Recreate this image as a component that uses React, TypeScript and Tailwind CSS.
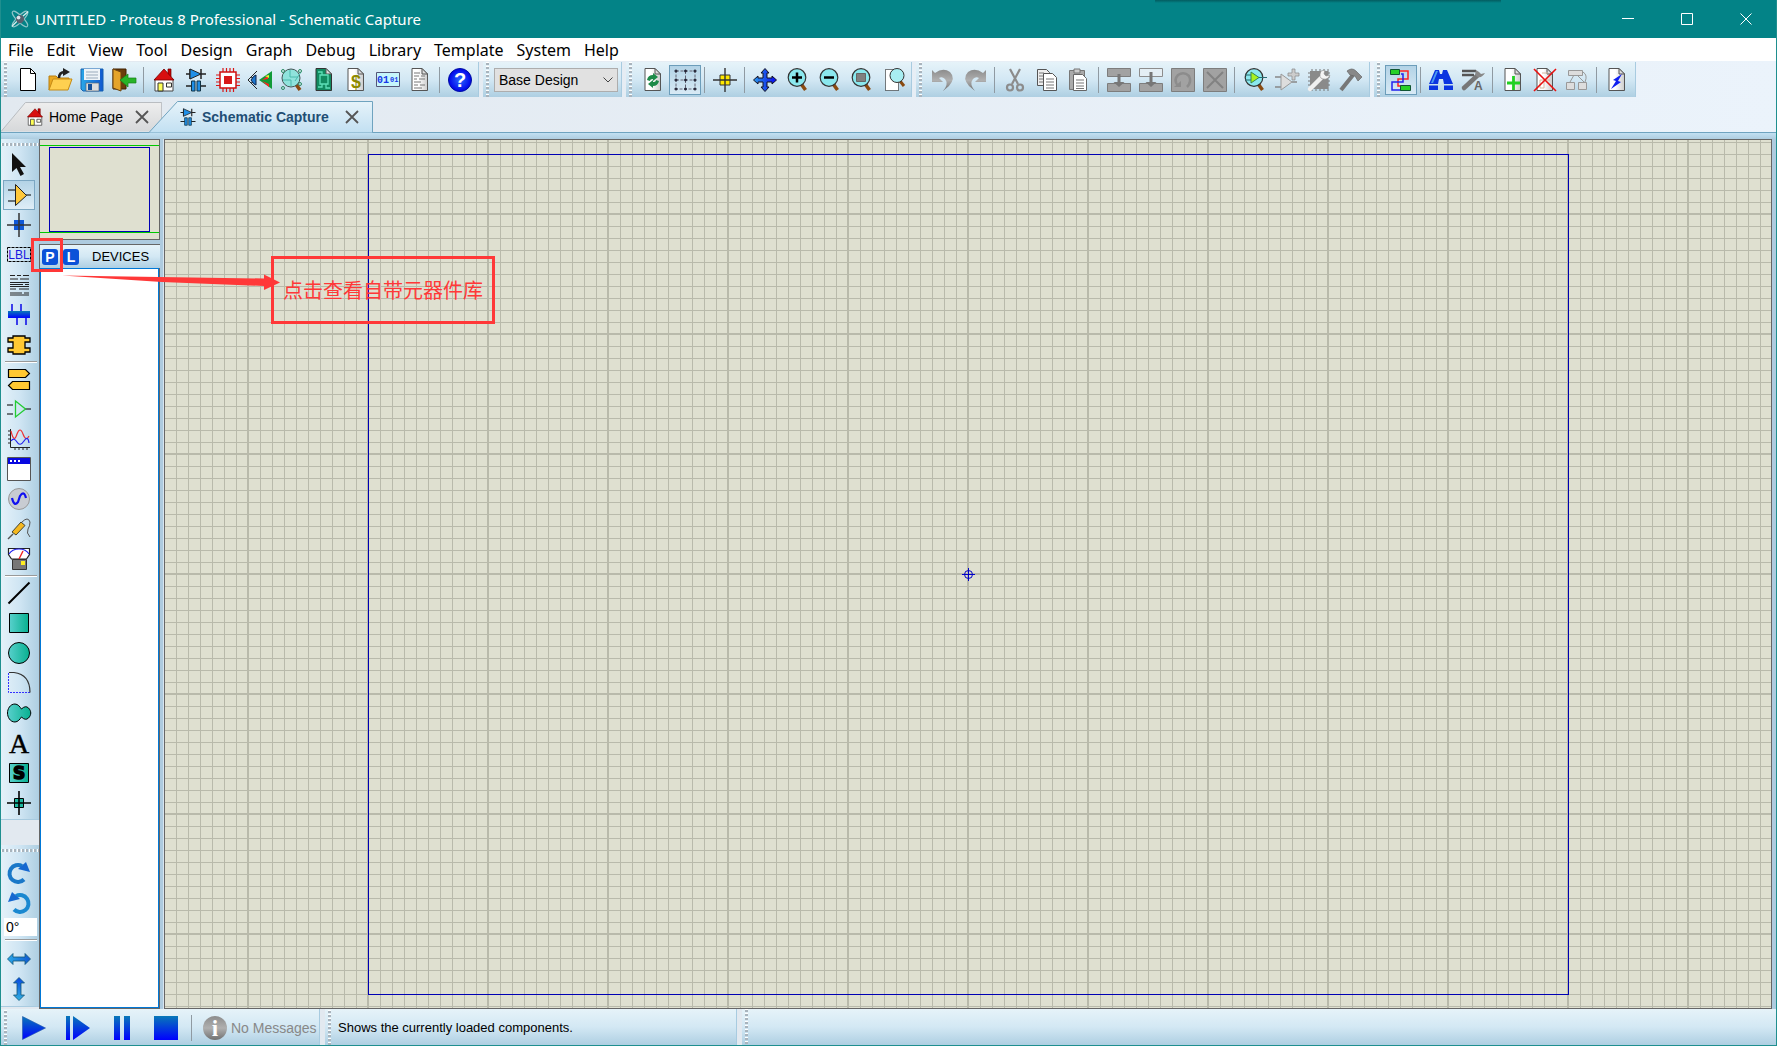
import { ReactNode, useState } from "react";

const page = (
  <>
    <path d="M4 .5h10l5.500 5.500v16.500H4z" fill="url(#paper)" stroke="#555" />
    <path d="M14 .5V6h5.500z" fill="#ddd" stroke="#555" />
  </>
);

const lens = (
  <>
    <path d="M15.500 15l5 7" stroke="#8a4a10" strokeWidth="3.500" />
    <circle cx="12" cy="9.500" r="8.800" fill="#8be8ee" stroke="#333" strokeWidth="1.200" />
  </>
);

const house = (
  <>
    <path d="M16 1h3v8h-3z" fill="#c00" stroke="#600" strokeWidth=".7" />
    <path d="M3 11h18v12H3z" fill="#fff" stroke="#444" />
    <path d="M12 1L2 12h20z" fill="#d80f0f" stroke="#700" strokeWidth=".8" />
    <path d="M6 15h5v8H6z" fill="#ff5" stroke="#333" />
    <path d="M14.500 15h5v4h-5z" fill="#ffe" stroke="#333" />
  </>
);

const parts = (
  <>
    <path d="M2 6h20M6 1v10M17 1v10M2 18h6M16 18h6" stroke="#222" strokeWidth="1.500" />
    <path d="M6 1l11 5-11 5z" fill="#1e8fe8" stroke="#222" />
    <path d="M7.500 13h3.500v10H7.500zM13 13h3.500v10H13z" fill="#1e8fe8" stroke="#134" />
  </>
);

const icons: Record<string, ReactNode> = {
  app: (
    <>
      <g fill="none" stroke="#8fc5c8" strokeWidth="1.500">
        <ellipse cx="12" cy="12" rx="14" ry="4" transform="rotate(45 12 12)" />
        <ellipse cx="12" cy="12" rx="14" ry="4" transform="rotate(-45 12 12)" />
      </g>
      <path d="M1 22l8-8M15 9l8-7" stroke="#e0f0f0" strokeWidth="1.500" />
      <circle cx="12" cy="12" r="5.500" fill="#56606e" />
      <circle cx="10" cy="10" r="2.500" fill="#dde4ea" />
    </>
  ),
  new: (
    <>
      <path d="M4.500 .5h10l5 5v17h-15z" fill="#fff" stroke="#000" />
      <path d="M14.500 .5v5h5" fill="none" stroke="#000" />
    </>
  ),
  open: (
    <>
      <path d="M1 22V8h7l2 2h11v4" fill="#e9a820" stroke="#b97f10" />
      <path d="M1 22l4-11h19l-4 11z" fill="#ffd050" stroke="#c58a14" />
      <path d="M11 10q0-6 6-6" fill="none" stroke="#222" strokeWidth="2.500" />
      <path d="M15 0l7 4-7 4z" fill="#222" />
    </>
  ),
  save: (
    <>
      <path d="M1 1h22v22H3l-2-2z" fill="url(#sky)" stroke="#1460b0" />
      <path d="M4 1h16v11H4z" fill="#eef4f8" />
      <path d="M6 4h12M6 7h12M6 10h12" stroke="#9ab" />
      <path d="M6 15h13v8H6z" fill="#ddd" stroke="#567" strokeWidth=".7" />
      <path d="M8 16h4v6H8z" fill="#15509a" />
    </>
  ),
  exit: (
    <>
      <path d="M1 1h13v20H1z" fill="#6b3e0c" stroke="#402000" />
      <path d="M1 1l8 3v19l-8-3z" fill="#e5a42a" stroke="#6b4310" />
      <path d="M8 12l8-6v4h8v5h-8v4z" fill="#28b428" stroke="#188018" strokeWidth=".7" />
    </>
  ),
  home: house,
  schematic: parts,
  pcb: (
    <>
      <path d="M7 0v24M10.500 0v24M14 0v24M17.500 0v24M0 7h24M0 10.500h24M0 14h24M0 17.500h24" stroke="#d81818" strokeWidth="1.200" />
      <path d="M4 4h16v16H4z" fill="#fff" stroke="#d01010" strokeWidth="1.500" />
      <path d="M8 8h8v8H8z" fill="#d81818" />
    </>
  ),
  view3d: (
    <>
      <path d="M9 3L0 12l9 9M3 9l5 2M3 15l5-2" fill="none" stroke="#222" />
      <path d="M3 12q3-5 5-5v10q-2 0-5-5z" fill="#1e78d0" stroke="#124" />
      <path d="M11 12L24 3v18z" fill="#119a38" />
      <path d="M14 12l6-4v3zM14 13l7 3v3z" fill="#f22" />
      <path d="M17 8l4-1v3z" fill="#ee3" />
    </>
  ),
  gerber: (
    <>
      <path d="M15 15l5 7" stroke="#8a4a10" strokeWidth="3.500" />
      <circle cx="11" cy="10" r="9" fill="#8fe3dc" stroke="#455" />
      <path d="M3 12h8v6M10 2v7h8M15 13l6-9" fill="none" stroke="#4bb9ac" />
      <g fill="none" stroke="#2a8a60">
        <circle cx="3" cy="20" r="1.500" />
        <circle cx="20" cy="3" r="1.500" />
        <circle cx="20" cy="16" r="1.500" />
        <circle cx="3" cy="3" r="1.500" />
      </g>
    </>
  ),
  explorer: (
    <>
      <path d="M4 .5h10l5.500 5.500v16.500H4z" fill="#118a60" stroke="#333" />
      <path d="M14 .5V6h5.500z" fill="#ddd" stroke="#555" />
      <path d="M8 7h8v9H8zM6 19h4v-3M14 16v4h4M6 4h4v3" fill="none" stroke="#5fe0b8" strokeWidth="1.300" />
    </>
  ),
  bom: (
    <>
      {page}
      <text x="12" y="19.500" textAnchor="middle" fontSize="18" fontWeight="700" fill="#8f8a00" fontFamily="Liberation Sans">$</text>
    </>
  ),
  source: (
    <>
      <path d="M.5 4.500h23v14H.5z" fill="#c6f5fb" stroke="#557" />
      <text x="1" y="15" fontSize="10" fontWeight="700" fill="#1838e8" fontFamily="Liberation Mono">01</text>
      <text x="14" y="14" fontSize="7" fontWeight="700" fill="#1838e8" fontFamily="Liberation Mono">01</text>
    </>
  ),
  notes: (
    <>
      {page}
      <path d="M6 5h6M6 8h5M13 8h4M6 11h3M11 11h6M6 14h7M6 17h4M12 17h5M6 20h8" stroke="#777" />
    </>
  ),
  help: (
    <>
      <circle cx="12" cy="12" r="11.500" fill="url(#ball)" stroke="#0010a0" />
      <text x="12" y="19" textAnchor="middle" fontSize="20" fontWeight="700" fill="#fff" fontFamily="Liberation Sans">?</text>
    </>
  ),
  refresh: (
    <>
      {page}
      <path d="M6 12q1-5 6-5V5l5 4-5 4v-2q-3 0-3 2z" fill="#1d8a48" />
      <path d="M18 13q-1 5-6 5v2l-5-4 5-4v2q3 0 3-2z" fill="#1d8a48" />
    </>
  ),
  grid: (
    <>
      <path d="M3 3h19v18H3zM12.500 3v18M3 12h19" fill="none" stroke="#667" strokeDasharray="3 1.500" />
      <path d="M1.500 3h3M3 1.500v3M11 3h3M12.500 1.500v3M20.500 3h3M22 1.500v3M1.500 12h3M3 10.500v3M11 12h3M12.500 10.500v3M20.500 12h3M22 10.500v3M1.500 21h3M3 19.500v3M11 21h3M12.500 19.500v3M20.500 21h3M22 19.500v3" stroke="#223" strokeWidth="1.300" />
    </>
  ),
  origin: (
    <>
      <path d="M7 7h10v10H7z" fill="#ffe800" stroke="#333" />
      <path d="M0 12h24M12 0v24" stroke="#333" strokeWidth="1.400" />
    </>
  ),
  pan: <path d="M12 .5l4 4.500h-2v5h5V8l4.500 4-4.500 4v-2h-5v5h2l-4 4.500L8 19h2v-5H5v2L.5 12 5 8v2h5V5H8z" fill="url(#blue)" stroke="#112" />,
  zoomIn: (
    <>
      {lens}
      <path d="M12 4.500v10M7 9.500h10" stroke="#000" strokeWidth="2.500" />
    </>
  ),
  zoomOut: (
    <>
      {lens}
      <path d="M7 9.500h10" stroke="#000" strokeWidth="2.500" />
    </>
  ),
  zoomAll: (
    <>
      {lens}
      <path d="M7.500 5.500h9v8h-9z" fill="#808080" stroke="#666" />
    </>
  ),
  zoomArea: (
    <>
      <path d="M4.500 1.500h13v21h-13z" fill="#fff" stroke="#000" strokeDasharray="1 1" />
      <path d="M19 13l4 5" stroke="#8a4a10" strokeWidth="3" />
      <circle cx="16" cy="7.500" r="7" fill="#a8eef2" stroke="#333" />
    </>
  ),
  undo: <path d="M1 2l3 3q8-6 15-1 6 6-1 14l-6 5q6-7 2-12-3-3-6-1l4 4H1z" fill="url(#grey)" />,
  redo: <path d="M23 2l-3 3q-8-6-15-1-6 6 1 14l6 5q-6-7-2-12 3-3 6-1l-4 4h11z" fill="url(#grey)" />,
  cut: (
    <g fill="none" stroke="#8c8c8c" strokeWidth="2.200">
      <path d="M7 1l8 15M17 1L9 16" />
      <circle cx="7" cy="19.500" r="3" />
      <circle cx="17" cy="19.500" r="3" />
    </g>
  ),
  copy: (
    <>
      <path d="M2.500 1.500h9l3 3v13h-12z" fill="#eee" stroke="#555" />
      <path d="M4 5h5M4 8h5M4 11h5M4 14h5" stroke="#777" />
      <path d="M8.500 5.500h9l4 4v13h-13z" fill="#fff" stroke="#555" />
      <path d="M11 11h8M11 14h8M11 17h8M11 20h8" stroke="#777" />
    </>
  ),
  paste: (
    <>
      <path d="M2.500 2.500h15v19h-15z" fill="#aaa" stroke="#777" />
      <path d="M7 1h6v4H7z" fill="#ccc" stroke="#777" />
      <path d="M6.500 6.500h9l4 4v12h-13z" fill="#fff" stroke="#666" />
      <path d="M9 12h8M9 15h8M9 18h8M9 20.500h8" stroke="#777" />
    </>
  ),
  blockCopy: (
    <>
      <path d="M.5 .5h23v8H.5zM.5 15.500h23v8H.5z" fill="#a2a2a2" stroke="#7d7d7d" />
      <path d="M10.500 6h3v8h4L12 19l-5.500-5h4z" fill="#777" />
    </>
  ),
  blockMove: (
    <>
      <path d="M.5 .5h23v8H.5z" fill="#e4eef4" stroke="#8d8d8d" />
      <path d="M.5 15.500h23v8H.5z" fill="#a2a2a2" stroke="#7d7d7d" />
      <path d="M10.500 4h3v10h4L12 19l-5.500-5h4z" fill="#777" />
    </>
  ),
  blockRotate: (
    <>
      <path d="M.5 .5h23v23H.5z" fill="#a2a2a2" stroke="#7d7d7d" />
      <path d="M7 18q-5-6 0-11 6-4 11 1 3 6-2 11" fill="none" stroke="#8c8c8c" strokeWidth="2.500" />
      <path d="M3 19h7v-6z" fill="#8c8c8c" />
    </>
  ),
  blockDelete: (
    <>
      <path d="M.5 .5h23v23H.5z" fill="#a2a2a2" stroke="#7d7d7d" />
      <path d="M4 4l16 16M20 4L4 20" stroke="#828282" strokeWidth="2" />
    </>
  ),
  pick: (
    <>
      <path d="M14.500 15l5 7" stroke="#8a4a10" strokeWidth="3.500" />
      <circle cx="11" cy="9.500" r="8.800" fill="#8be8ee" stroke="#333" strokeWidth="1.200" />
      <path d="M2 7h7M2 12h7M15 9.500h9" stroke="#2a6a70" />
      <path d="M8 4l8 5.500L8 15z" fill="#a8f020" stroke="#385" />
    </>
  ),
  make: (
    <>
      <path d="M0 9h6M0 19h6M17 14h5" stroke="#888" strokeWidth="1.300" />
      <path d="M6 6l11 8-11 8z" fill="#ddd" stroke="#999" />
      <path d="M17 1h3v4h4v3h-4v4h-3V8h-4V5h4z" fill="#ccc" stroke="#888" strokeWidth=".7" />
    </>
  ),
  packaging: (
    <>
      <path d="M5 1v22M9 1v22M13 1v22M17 1v22M21 1v22M1 5h22M1 9h22M1 13h22M1 17h22" stroke="#777" />
      <path d="M3 3h18v18H3z" fill="#8a8a8a" />
      <path d="M3 21L16 8" stroke="#f0f0f0" strokeWidth="4.500" strokeLinecap="round" />
      <path d="M14 3q-3 7 2 8t7-4l-4 1-2-2 1-4z" fill="#f4f4f4" stroke="#888" strokeWidth=".6" />
    </>
  ),
  decompose: (
    <>
      <path d="M14 7L2 22" stroke="#777" strokeWidth="4" />
      <path d="M8 3q5-4 9 0l6 6-4 4-3-5-5-1z" fill="#888" stroke="#666" strokeWidth=".7" />
    </>
  ),
  autoroute: (
    <>
      <path d="M11 3h8v8H9v7h4" fill="none" stroke="#f22" strokeWidth="1.500" />
      <path d="M12 6h2v8H3v8h9" fill="none" stroke="#22e" strokeWidth="1.500" />
      <path d="M1.500 1.500h9v5h-9zM11.500 17.500h10v5h-10z" fill="#28d028" stroke="#153" />
    </>
  ),
  search: (
    <>
      <path d="M6 2h4l1 4h2l1-4h4l6 14h-9l-1-5h-4l-1 5H0z" fill="#0a34e0" />
      <path d="M7 3h2L4 15H2z" fill="#4a9af0" />
      <path d="M0 17.500h9V22H0zM15 17.500h9V22h-9z" fill="#0a34e0" />
    </>
  ),
  property: (
    <>
      <path d="M1 3h14M1 7h12" stroke="#555" strokeWidth="2.500" />
      <path d="M3 20L17 7" stroke="#777" strokeWidth="4.500" strokeLinecap="round" />
      <path d="M15 2q-2 6 2 7t7-4l-4 1-2-2z" fill="#888" />
      <text x="13" y="22" fontSize="12" fontWeight="700" fill="#666" fontFamily="Liberation Sans">A</text>
    </>
  ),
  newSheet: (
    <>
      {page}
      <path d="M12.500 8v14M6 15h13" stroke="#22d022" strokeWidth="2.800" />
    </>
  ),
  removeSheet: (
    <>
      {page}
      <path d="M9 5h6M7 12h4v8H7zM13 12h4" fill="none" stroke="#d8b8a0" />
      <path d="M1 1l22 22M23 1L1 23" stroke="#e81010" strokeWidth="1.600" />
    </>
  ),
  exitSheet: (
    <g fill="#ddd" stroke="#999">
      <path d="M9 7l-4 7M12 7l7 7M18 4q5 3 2 10" fill="none" />
      <path d="M3.500 2.500h14v5h-14zM1.500 14.500h8v7h-8zM13.500 14.500h8v7h-8z" />
    </g>
  ),
  erc: (
    <>
      {page}
      <path d="M17 6l-9 6 3 1-5 8 10-7-3-1z" fill="#1020f0" />
    </>
  ),
  // mode icons
  select: <path d="M5 0v19l4.500-4 4 8 3.500-2-4-7h6z" fill="#111" />,
  component: (
    <>
      <path d="M1 7h8M1 18h8M19 12h5" stroke="#000" />
      <path d="M8.500 1.500l11 11-11 10z" fill="#ffc83a" stroke="#222" />
    </>
  ),
  junction: (
    <>
      <path d="M7 7h10v10H7z" fill="#0f58d8" />
      <path d="M0 12h24M12 0v24" stroke="#333" strokeWidth="1.500" />
    </>
  ),
  label: (
    <>
      <path d="M.5 4.500h23v14H.5z" fill="none" stroke="#000" strokeDasharray="3 1" />
      <text x="12" y="16" textAnchor="middle" fontSize="12" fill="#1a1ae0" fontFamily="Liberation Sans">LBL</text>
    </>
  ),
  script: <path d="M3 2.500h5M10 2.500h4M16 2.500h6M3 6h8M13 6h9M3 9.500h19M3 11.500h13M18 11.500h4M3 13.500h19M3 16h6M12 16h10M3 20h12M17 20h5M3 22h19" stroke="#222" />,
  bus: (
    <>
      <path d="M5 1v8M14 1v8M10 14v8M19 14v8" stroke="#1414e8" strokeWidth="1.600" />
      <path d="M1 8h22v7H1z" fill="url(#deep)" />
    </>
  ),
  subcircuit: <path d="M6 3h12v2h5v4h-5v6h5v4h-5v2H6v-2H1v-4h5V9H1V5h5z" fill="#ffc832" stroke="#000" strokeWidth="1.300" />,
  terminal: (
    <g fill="#ffc832" stroke="#000" strokeWidth="1.200">
      <path d="M1.500 2.500h17l4 4-4 4h-17zM22.500 14.500h-17l-4 4 4 4h17z" />
    </g>
  ),
  pin: (
    <>
      <path d="M0 8h6M0 17h6M18 12h6" stroke="#000" />
      <path d="M8.500 4l10 8-10 8z" fill="none" stroke="#2c3" strokeWidth="1.300" />
    </>
  ),
  graph: (
    <>
      <path d="M3.500 2v18.500H23M1 4h3M1 8h3M1 12h3M1 16h3M8 20v3M12 20v3M16 20v3M20 20v3" fill="none" stroke="#222" />
      <path d="M4 4q3 13 6 3 3-8 6 0t6 2" fill="none" stroke="#e33" strokeWidth="1.200" />
      <path d="M4 14q3-4 6 1t7-1 5 2" fill="none" stroke="#22e" strokeWidth="1.200" />
    </>
  ),
  tape: (
    <>
      <path d="M.5 .5h23v23H.5z" fill="#fff" stroke="#555" />
      <path d="M1 1h22v6H1z" fill="#0808e0" />
      <path d="M3 4h2M7 4h2M11 4h2" stroke="#fff" strokeWidth="2" />
    </>
  ),
  generator: (
    <>
      <circle cx="12" cy="12" r="10.500" fill="#c8ccd2" stroke="#999" />
      <path d="M5 11q2 9 6 4l2-6q4-6 6 2" fill="none" stroke="#1010f0" strokeWidth="2.200" />
    </>
  ),
  probe: (
    <>
      <path d="M1 22l5-5" stroke="#555" strokeWidth="1.500" />
      <path d="M15 5q6-6 8 0 0 4-2 7-2 4 2 8" fill="none" stroke="#555" />
      <path d="M5 15L14 5l4 3.500L9 18z" fill="#f5b820" stroke="#443" />
    </>
  ),
  meter: (
    <>
      <path d="M1.500 1.500h21v6l-3 4.500h-15l-3-4.500z" fill="#fff" stroke="#222" strokeWidth="1.200" />
      <path d="M2 7q3-5 10-5t10 5" fill="none" stroke="#22e" strokeWidth="1.200" />
      <path d="M12 12l4-8" stroke="#e22" strokeWidth="1.400" />
      <path d="M5.500 12.500h14v10h-14z" fill="#777" stroke="#333" />
      <path d="M14 14h4v4h-4z" fill="#fe2" />
    </>
  ),
  line: <path d="M1.500 22.500l21-21" stroke="#000" strokeWidth="2" />,
  box: <path d="M2.500 2.500h19v19h-19z" fill="url(#green)" stroke="#000" />,
  circle: <circle cx="12" cy="12" r="10.500" fill="url(#green)" stroke="#000" />,
  arc: (
    <>
      <path d="M1.500 2v19.500H23" fill="none" stroke="#33f" strokeDasharray="2 1" />
      <path d="M2 1.500h5q16 2 16 20" fill="none" stroke="#333" strokeWidth="1.200" />
    </>
  ),
  path: <path d="M8 3c3 0 5 3 6.500 5q4-4 7-1c3 3 3 7 0 10q-3 3-7-1C13 18 11 21 8 21 3 21 .5 16 .5 12S3 3 8 3z" fill="url(#green)" stroke="#000" />,
  text: <text x="12" y="22" textAnchor="middle" fontSize="28" fill="#000" stroke="#000" strokeWidth=".4" fontFamily="Liberation Serif">A</text>,
  symbol: (
    <>
      <path d="M2.500 2.500h19v19h-19z" fill="url(#green)" stroke="#000" />
      <text x="12" y="18" textAnchor="middle" fontSize="17" fontWeight="700" fill="#000" stroke="#000" strokeWidth="1.500" fontFamily="DejaVu Sans">S</text>
    </>
  ),
  marker: (
    <>
      <path d="M7.500 7.500h9v9h-9z" fill="#1db8a0" stroke="#000" />
      <path d="M0 12h24M12 0v24" stroke="#000" strokeWidth="1.600" />
    </>
  ),
  rotateCw: (
    <>
      <path d="M17 18.500A8.500 8.500 0 1 1 15 5" fill="none" stroke="#1a78c8" strokeWidth="4" />
      <path d="M19 1l4 10-12-3z" fill="#1668d0" />
    </>
  ),
  rotateCcw: (
    <>
      <path d="M7 18.500A8.500 8.500 0 1 0 9 5" fill="none" stroke="#1a88d0" strokeWidth="4" />
      <path d="M5 1L1 11l12-3z" fill="#1668d0" />
    </>
  ),
  mirrorX: <path d="M.5 12L6 6.500V10h12V6.500l5.500 5.500L18 17.500V14H6v3.500z" fill="url(#sky)" stroke="#157" strokeWidth=".8" />,
  mirrorY: <path d="M12 .5L6.500 6H10v12H6.500l5.500 5.500 5.500-5.500H14V6h3.500z" fill="url(#deepUp)" stroke="#157" strokeWidth=".8" />,
  play: <path d="M.5 .5l23 11.500-23 11.500z" fill="url(#deep)" stroke="#25a" strokeWidth=".6" />,
  step: <path d="M0 0h4v24H0zM7 0l17 12L7 24z" fill="url(#deep)" />,
  pause: <path d="M4 0h6v24H4zM14 0h6v24h-6z" fill="url(#deep)" />,
  stop: <path d="M0 0h24v24H0z" fill="url(#deep)" />,
  info: (
    <>
      <circle cx="12" cy="12" r="12" fill="url(#grey)" />
      <text x="12" y="20" textAnchor="middle" fontSize="23" fontWeight="700" fill="#fff" fontFamily="Liberation Serif">i</text>
    </>
  ),
};

const menus = ["File", "Edit", "View", "Tool", "Design", "Graph", "Debug", "Library", "Template", "System", "Help"];

const fileBar = [
  ["new", "open", "save", "exit"],
  ["home", "schematic", "pcb", "view3d", "gerber", "explorer", "bom", "source", "notes"],
  ["help"],
];
const viewBar = [["refresh", "grid"], ["origin"], ["pan", "zoomIn", "zoomOut", "zoomAll", "zoomArea"]];
const editBar = [
  ["undo", "redo"],
  ["cut", "copy", "paste"],
  ["blockCopy", "blockMove", "blockRotate", "blockDelete"],
  ["pick", "make", "packaging", "decompose"],
];
const designBar = [["autoroute"], ["search", "property"], ["newSheet", "removeSheet", "exitSheet"], ["erc"]];
const modeBar = [
  ["select", "component", "junction", "label", "script", "bus", "subcircuit"],
  ["terminal", "pin", "graph", "tape", "generator", "probe", "meter"],
  ["line", "box", "circle", "arc", "path", "text", "symbol", "marker"],
];

function Icon({ name, className = "size-6" }: { name: string; className?: string }) {
  return (
    <svg viewBox="0 0 24 24" className={`shrink-0 overflow-visible ${className}`} aria-hidden="true">
      {icons[name]}
    </svg>
  );
}

function Gradients() {
  return (
    <svg className="absolute size-0" aria-hidden="true">
      <defs>
        <linearGradient id="paper"><stop offset=".4" stopColor="#fff" /><stop offset="1" stopColor="#ccc" /></linearGradient>
        <linearGradient id="sky"><stop stopColor="#2ba8e8" /><stop offset="1" stopColor="#1058d0" /></linearGradient>
        <linearGradient id="blue"><stop stopColor="#2b98e8" /><stop offset="1" stopColor="#0808f0" /></linearGradient>
        <linearGradient id="green"><stop stopColor="#58d0cc" /><stop offset="1" stopColor="#08b090" /></linearGradient>
        <linearGradient id="deep" x2="0" y2="1"><stop stopColor="#0878b8" /><stop offset="1" stopColor="#0000ff" /></linearGradient>
        <linearGradient id="deepUp" x2="0" y2="1"><stop stopColor="#0848e0" /><stop offset="1" stopColor="#30b0e0" /></linearGradient>
        <linearGradient id="grey" x2="0" y2="1"><stop stopColor="#8c8c8c" /><stop offset=".5" stopColor="#b0b0b0" /><stop offset="1" stopColor="#707070" /></linearGradient>
        <radialGradient id="ball"><stop stopColor="#2a6aff" /><stop offset="1" stopColor="#0000e8" /></radialGradient>
      </defs>
    </svg>
  );
}

const barBg = "bg-linear-to-b from-[#e6f3f9] via-[#d3e8f4] to-[#aecfe2]";

function Grip() {
  return (
    <span className="w-[3px] shrink-0 self-stretch bg-[repeating-linear-gradient(to_bottom,#fff_0_1px,#a9b4bd_1px_3px,transparent_3px_4px)]" />
  );
}

function Toolbar({ groups, active, label }: { groups: string[][]; active?: string; label: string }) {
  return (
    <div role="toolbar" aria-label={label} className={`flex h-[35px] items-center border-r border-[#a8cbe0] pl-[3px] ${barBg}`}>
      <Grip />
      <div className="flex items-center pr-0.5 pl-[5px]">
        {groups.map((group, i) => (
          <div key={i} className="flex items-center">
            {i > 0 && <span className="mr-1 ml-[3px] h-[26px] w-px bg-[#8f9aa2]" />}
            {group.map((name) => (
              <button
                key={name}
                aria-label={name}
                className={`flex h-[30px] w-8 items-center justify-center ${
                  name === active ? "border border-[#6c9dba] bg-linear-to-b from-[#b3d3e6] to-[#d8eaf5]" : ""
                }`}
              >
                <Icon name={name} />
              </button>
            ))}
          </div>
        ))}
      </div>
    </div>
  );
}

function Tab({ title, icon, active }: { title: string; icon: string; active?: boolean }) {
  return (
    <div className={`relative flex items-center ${active ? "z-10 -ml-[13px] h-8 w-[224px] pl-[30px]" : "h-[30px] w-[161px] pl-[25px]"}`}>
      <svg viewBox="0 0 224 32" preserveAspectRatio="none" className="absolute inset-0 size-full" aria-hidden="true">
        <path
          d={active ? "M0 31.500L28.500 .5H223.500V31.500" : "M0 31.500L34 .5H223.500V31.500"}
          fill={active ? "url(#tabOn)" : "url(#tabOff)"}
          stroke={active ? "#6fa3bf" : "#b8bcc0"}
          vectorEffect="non-scaling-stroke"
        />
        <defs>
          <linearGradient id="tabOn" x2="0" y2="1"><stop stopColor="#e6f3fa" /><stop offset="1" stopColor="#c2e0f2" /></linearGradient>
          <linearGradient id="tabOff" x2="0" y2="1"><stop stopColor="#eeeeee" /><stop offset="1" stopColor="#d6d8da" /></linearGradient>
        </defs>
      </svg>
      <button className={`relative flex items-center text-sm ${active ? "gap-[5px] font-bold text-[#1f4e74]" : "gap-[5px] text-black"}`}>
        <Icon name={icon} className="size-[18px]" />
        {title}
      </button>
      <button aria-label={`Close ${title}`} className={`relative ${active ? "ml-4" : "ml-3"}`}>
        <svg viewBox="0 0 14 14" className="size-3.5">
          <path d="M1 1l12 12M13 1L1 13" stroke="#555" strokeWidth="1.800" />
        </svg>
      </button>
    </div>
  );
}

function ModeButton({ name, active }: { name: string; active?: boolean }) {
  return (
    <button
      aria-label={name}
      className={`flex h-[30px] w-8 items-center justify-center ${
        active ? "border border-[#7ba6c2] bg-linear-to-b from-[#b3d3e6] to-[#deedf7]" : ""
      }`}
    >
      <Icon name={name} />
    </button>
  );
}

const sideBg = "bg-linear-to-r from-[#e4f1f9] via-[#cfe5f3] to-[#aecfe2]";

function SideGrip() {
  return (
    <span className="mt-1 h-[3px] w-full bg-[repeating-linear-gradient(to_right,#fff_0_1px,#a9b4bd_1px_3px,transparent_3px_4px)]" />
  );
}

function SideBars() {
  const [angle, setAngle] = useState("0°");

  return (
    <div className="flex w-[38px] shrink-0 flex-col justify-between bg-[#e2e9f0] pb-0.5">
      <div role="toolbar" aria-label="Modes" className={`flex flex-col border-b border-[#a8cbe0] pb-px ${sideBg}`}>
        <SideGrip />
        <div className="flex flex-col pt-1 pl-0.5">
          {modeBar.map((group, i) => (
            <div key={i} className="flex flex-col">
              {i > 0 && <span className="my-px ml-0.5 h-0.5 w-8 border-t border-[#999] bg-white" />}
              {group.map((name) => (
                <ModeButton key={name} name={name} active={name === "component"} />
              ))}
            </div>
          ))}
        </div>
      </div>
      <div role="toolbar" aria-label="Orientation" className={`flex flex-col border-b border-[#a8cbe0] pb-0.5 ${sideBg}`}>
        <SideGrip />
        <div className="flex flex-col pt-1.5 pl-0.5">
          <ModeButton name="rotateCw" />
          <ModeButton name="rotateCcw" />
          <input
            aria-label="Angle"
            value={angle}
            onChange={(e) => setAngle(e.target.value)}
            className="ml-px h-[18px] w-[33px] bg-white pl-0.5 text-sm leading-4 outline-none"
          />
          <span className="my-[3px] ml-0.5 h-0.5 w-8 border-t border-[#999] bg-white" />
          <ModeButton name="mirrorX" />
          <ModeButton name="mirrorY" />
        </div>
      </div>
    </div>
  );
}

function DevicePanel() {
  return (
    <div className="flex w-[121px] shrink-0 flex-col">
      <div className="h-[101px] border border-[#666] bg-[#dfe0d0] pt-[5px] pb-1.5">
        <div className="flex h-full justify-center border-y border-[#00c800] pt-px">
          <div className="w-[101px] border border-[#0000b4]" />
        </div>
      </div>
      <div className={`mt-1 flex h-[24px] items-center gap-[5px] border-t border-l border-[#666] px-0.5 ${barBg}`}>
        {["P", "L"].map((letter) => (
          <button key={letter} className="size-4 rounded-[3px] bg-[#0b52d8] text-center text-sm leading-4 font-bold text-white">
            {letter}
          </button>
        ))}
        <span className="ml-2 text-[13px]">DEVICES</span>
      </div>
      <div className="flex-1 border border-[#666] border-t-0">
        <div className="h-full border border-[#0078d7] bg-white" />
      </div>
    </div>
  );
}

function Canvas() {
  return (
    <div className="relative flex-1 overflow-hidden border border-[#666] bg-[#dfe0d0] bg-[linear-gradient(to_right,transparent_118px,#b9baab_118px),linear-gradient(to_bottom,transparent_118px,#b9baab_118px),linear-gradient(to_right,transparent_11px,#b9baab_11px),linear-gradient(to_bottom,transparent_11px,#b9baab_11px)] bg-size-[120px_120px,120px_120px,12px_12px,12px_12px] bg-position-[-36px_0px,0px_-45px,0px_0px,0px_3px]">
      <div className="absolute top-[14px] left-[203px] flex h-[841px] w-[1201px] items-center justify-center border border-[#0000b4]">
        <svg viewBox="0 0 13 13" className="size-[13px]" aria-hidden="true">
          <path d="M0 6.500h13M6.500 0v13" stroke="#0000c8" />
          <circle cx="6.500" cy="6.500" r="4" fill="none" stroke="#0000c8" />
        </svg>
      </div>
    </div>
  );
}

function StatusBar() {
  return (
    <footer className="flex h-9 gap-[5px] bg-[#e2e9f0]">
      <div className={`flex w-[319px] items-center border-r border-[#a8cbe0] pt-px pl-[3px] ${barBg}`}>
        <Grip />
        <div className="flex items-center pl-[5px]">
          {["play", "step", "pause", "stop"].map((name) => (
            <button key={name} aria-label={name} className="flex w-11 justify-center">
              <Icon name={name} />
            </button>
          ))}
        </div>
        <span className="ml-[3px] h-[26px] w-px bg-[#8f9aa2]" />
        <Icon name="info" className="ml-[11px] size-6" />
        <span className="ml-1 text-sm whitespace-nowrap text-[#888]">No Messages</span>
      </div>
      <div className={`flex w-[412px] items-center border-r border-[#a8cbe0] pt-px pl-[3px] ${barBg}`}>
        <Grip />
        <span className="ml-[7px] text-[13px]">Shows the currently loaded components.</span>
      </div>
      <div className={`flex flex-1 pl-[3px] ${barBg}`}>
        <Grip />
      </div>
    </footer>
  );
}

// red markup drawn on top of the window
function Callout() {
  return (
    <div className="pointer-events-none absolute inset-0">
      <div className="absolute top-[238px] left-[30px] h-[34px] w-8 border-3 border-[#ff3838]" />
      <svg viewBox="0 0 218 18" className="absolute top-[273px] left-[61px] h-[18px] w-[218px]" aria-hidden="true">
        <path d="M0 2.500L202 5.500V1.500L218 9.500L202 17V13L100 9z" fill="#ff3838" />
      </svg>
      <div className="absolute top-[256px] left-[270px] flex h-[68px] w-[224px] items-center justify-center border-3 border-[#ff3838] font-['Noto_Sans_CJK_SC',sans-serif] text-xl text-[#ff3838]">
        点击查看自带元器件库
      </div>
    </div>
  );
}

export default function App() {
  const [design, setDesign] = useState("Base Design");

  return (
    <div className="relative flex min-h-screen flex-col border-x border-b border-[#1f8f8f] bg-[#e3eaf1] font-['Liberation_Sans',Arial,sans-serif] text-black">
      <Gradients />
      <header className="relative flex h-[38px] items-center bg-[#038387] pr-px pl-2.5 font-['Noto_Sans',sans-serif] text-white">
        <div className="absolute top-0 right-[275px] h-[3px] w-[346px] bg-linear-to-b from-[#035c60] to-[#038387]" />
        <Icon name="app" className="size-[18px]" />
        <h1 className="ml-1.5 text-[15px]">UNTITLED - Proteus 8 Professional - Schematic Capture</h1>
        <div className="ml-auto flex h-full">
          {[
            ["Minimize", "M0 5.500h12"],
            ["Maximize", "M.5 .5h11v11H.5z"],
            ["Close", "M.5 .5l11 11M11.500 .5l-11 11"],
          ].map(([label, d]) => (
            <button key={label} aria-label={label} className="flex w-[59px] items-center justify-center">
              <svg viewBox="0 0 12 12" className="size-3">
                <path d={d} fill="none" stroke="#fff" />
              </svg>
            </button>
          ))}
        </div>
      </header>

      <nav className="flex h-[23px] items-center gap-[13px] bg-white pl-[7px] font-['Noto_Sans',sans-serif] text-base">
        {menus.map((item) => (
          <button key={item}>{item}</button>
        ))}
      </nav>

      <div className="bg-linear-to-r from-[#e2e9f0] to-[#ebf3fb]">
        <div className="flex gap-1 pt-px">
          <Toolbar groups={fileBar} label="File" />
          <div className={`flex h-[35px] items-center border-r border-[#a8cbe0] pr-[3px] pl-[3px] ${barBg}`}>
            <Grip />
            <div className="relative ml-[5px]">
              <select
                aria-label="Design variant"
                value={design}
                onChange={(e) => setDesign(e.target.value)}
                className="block h-6 w-[124px] appearance-none border border-[#adadad] bg-[#e1e1e1] pl-1 text-sm"
              >
                <option>Base Design</option>
              </select>
              <svg viewBox="0 0 10 6" className="pointer-events-none absolute top-[9px] right-[5px] h-1.5 w-2.5" aria-hidden="true">
                <path d="M.5 .5L5 5l4.500-4.500" fill="none" stroke="#444" />
              </svg>
            </div>
          </div>
          <Toolbar groups={viewBar} active="grid" label="View" />
          <Toolbar groups={editBar} label="Edit" />
          <Toolbar groups={designBar} active="autoroute" label="Design" />
        </div>
        <div className="flex h-[36px] items-end border-b border-[#6fa3bf]">
          <Tab title="Home Page" icon="home" />
          <div className="-mb-px flex">
            <Tab title="Schematic Capture" icon="schematic" active />
          </div>
        </div>
      </div>

      <div className="h-1.5 bg-linear-to-b from-[#c2e0f2] to-[#aecde0]" />
      <main className="flex flex-1 bg-[#aecbdf] pr-1">
        <SideBars />
        <DevicePanel />
        <div className="w-1 shrink-0 border-r border-[#d8e6f0]" />
        <Canvas />
      </main>
      <StatusBar />
      <Callout />
    </div>
  );
}
